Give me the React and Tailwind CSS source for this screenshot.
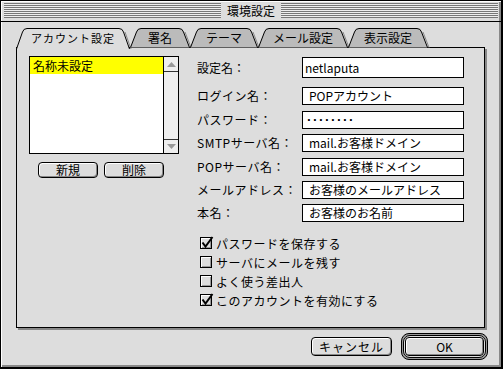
import React from "react";

const tabs = [
  { label: "アカウント設定", w: 114, cls: "w-[114px]", active: true },
  { label: "署名", w: 60, cls: "w-[60px]" },
  { label: "テーマ", w: 68, cls: "w-[68px]" },
  { label: "メール設定", w: 90, cls: "w-[90px]" },
  { label: "表示設定", w: 80, cls: "w-[80px]" },
];

function Tab({ label, w, cls, active }) {
  const h = active ? 21 : 19.5;
  const d = `M0.5 ${h} L6.5 4 Q7.5 0.5 11 0.5 L${w - 11} 0.5 Q${w - 7.5} 0.5 ${w - 6.5} 4 L${w - 0.5} ${h}`;
  return (
    <div className={`relative h-[19px] shrink-0 flex items-center justify-center ${cls}`}>
      <svg className="absolute left-0 top-0 overflow-visible" width={w} height={h}>
        <path d={d + " Z"} fill={active ? "#dddddd" : "#bbbbbb"} />
        <path d={`M${w - 5} 4 L${w + 1} ${h}`} stroke="#888" fill="none" />
        <path d={d} fill="none" stroke="#000" />
      </svg>
      <span className={`relative pt-[1px] ${active ? "tracking-[1px] text-[11px]" : ""}`}>{label}</span>
    </div>
  );
}

const fields = [
  { label: "ログイン名：", value: "POPアカウント", mt: "mt-[9px]" },
  { label: "パスワード：", value: "········", mt: "mt-[6px]", pw: true },
  { label: "SMTPサーバ名：", value: "mail.お客様ドメイン", mt: "mt-[5px]" },
  { label: "POPサーバ名：", value: "mail.お客様ドメイン", mt: "mt-[6px]" },
  { label: "メールアドレス：", value: "お客様のメールアドレス", mt: "mt-[5px]" },
  { label: "本名：", value: "お客様のお名前", mt: "mt-[5px]" },
];

const checks = [
  { label: "パスワードを保存する", on: true },
  { label: "サーバにメールを残す", on: false },
  { label: "よく使う差出人", on: false },
  { label: "このアカウントを有効にする", on: true },
];

function Button({ children, cls }) {
  return (
    <div
      className={`flex items-center justify-center rounded-[4px] border border-black bg-[#dddddd] shadow-[inset_1px_1px_0_#fff,inset_-1px_-1px_0_#888] ${cls}`}
    >
      {children}
    </div>
  );
}

function Checkbox({ on }) {
  return (
    <div className="relative w-[12px] h-[12px] mt-[3px] shrink-0 border border-black bg-[#dddddd] shadow-[inset_1px_1px_0_#fff,inset_-1px_-1px_0_#999]">
      {on && (
        <svg className="absolute left-[-1px] top-[-2px] overflow-visible" width="14" height="14">
          <path d="M2.5 6.5 L5.5 10.5 L12.5 1" fill="none" stroke="#000" strokeWidth="2" />
        </svg>
      )}
    </div>
  );
}

export default function App() {
  return (
    <div className="w-[503px] h-[369px] flex flex-col bg-[#dddddd] border-l border-t border-r-2 border-b-2 border-black shadow-[inset_1px_1px_0_#fff,inset_-2px_-2px_0_#888] text-[12px] leading-none text-black font-['Noto_Sans_CJK_JP',sans-serif] overflow-hidden">
      {/* title bar */}
      <div className="h-[21px] shrink-0 border-b border-black flex items-start pt-[2px] px-[3px]">
        <div className="flex-1 h-[15px] bg-[repeating-linear-gradient(#777_0_1px,#eeeeee_1px_2px)]" />
        <div className="px-[6px] h-[15px] flex items-center">環境設定</div>
        <div className="flex-1 h-[15px] bg-[repeating-linear-gradient(#777_0_1px,#eeeeee_1px_2px)]" />
      </div>

      <div className="flex-1 pt-[6px] pl-[15px]">
        {/* tabs */}
        <div className="relative z-10 flex h-[19px]">
          {tabs.map((t) => (
            <Tab key={t.label} {...t} />
          ))}
        </div>

        {/* panel */}
        <div className="w-[469px] h-[281px] flex border border-black shadow-[2px_2px_0_#888]">
          <div className="pl-[12px] pt-[8px]">
            <div className="w-[150px] h-[98px] flex border border-black bg-white">
              <div className="flex-1">
                <div className="h-[17px] bg-[#ffff00] pl-[3px] flex items-center">名称未設定</div>
              </div>
              <div className="w-[15px] flex flex-col border-l border-black bg-[#eeeeee]">
                <div className="h-[15px] border-b border-[#333] flex items-center justify-center">
                  <svg width="9" height="5">
                    <path d="M4.5 0 L9 5 L0 5 Z" fill="#999" />
                  </svg>
                </div>
                <div className="flex-1" />
                <div className="h-[14px] border-t border-[#333] flex items-center justify-center">
                  <svg width="9" height="5">
                    <path d="M0 0 L9 0 L4.5 5 Z" fill="#999" />
                  </svg>
                </div>
              </div>
            </div>
            <div className="flex gap-[6px] ml-[9px] mt-[8px]">
              <Button cls="w-[60px] h-[16px]">新規</Button>
              <Button cls="w-[60px] h-[16px]">削除</Button>
            </div>
          </div>

          <div className="ml-[18px] pt-[9px] flex flex-col">
            <div className="flex items-center h-[21px]">
              <div className="w-[105px]">設定名：</div>
              <div className="w-[162px] h-[21px] border border-black bg-white pl-[2px] flex items-center">netlaputa</div>
            </div>
            {fields.map((f) => (
              <div key={f.label} className={`flex items-center h-[18px] ${f.mt}`}>
                <div className="w-[105px] tracking-[0.5px]">{f.label}</div>
                {f.pw ? (
                  <div className="w-[162px] h-[18px] border border-black bg-white pl-[2px] flex items-center font-['Liberation_Mono',monospace] text-[13px] font-bold tracking-[-1.8px]">
                    {f.value}
                  </div>
                ) : (
                  <div className="w-[162px] h-[18px] border border-black bg-white pl-[6px] flex items-center">
                    {f.value}
                  </div>
                )}
              </div>
            ))}
            <div className="mt-[12px] flex flex-col">
              {checks.map((c) => (
                <div key={c.label} className="flex items-start h-[19px] ml-[3px] gap-[4px]">
                  <Checkbox on={c.on} />
                  <div className="h-[19px] flex items-center tracking-[0.5px]">{c.label}</div>
                </div>
              ))}
            </div>
          </div>
        </div>

        {/* bottom buttons */}
        <div className="flex justify-end items-center gap-[9px] pr-[13px] mt-[5px]">
          <Button cls="w-[81px] h-[19px] tracking-[1px]">キャンセル</Button>
          <div className="rounded-[8px] border border-black bg-[#999999] p-px">
            <div className="rounded-[7px] border border-black bg-[#dddddd] p-px">
              <Button cls="w-[79px] h-[19px]">OK</Button>
            </div>
          </div>
        </div>
      </div>
    </div>
  );
}
